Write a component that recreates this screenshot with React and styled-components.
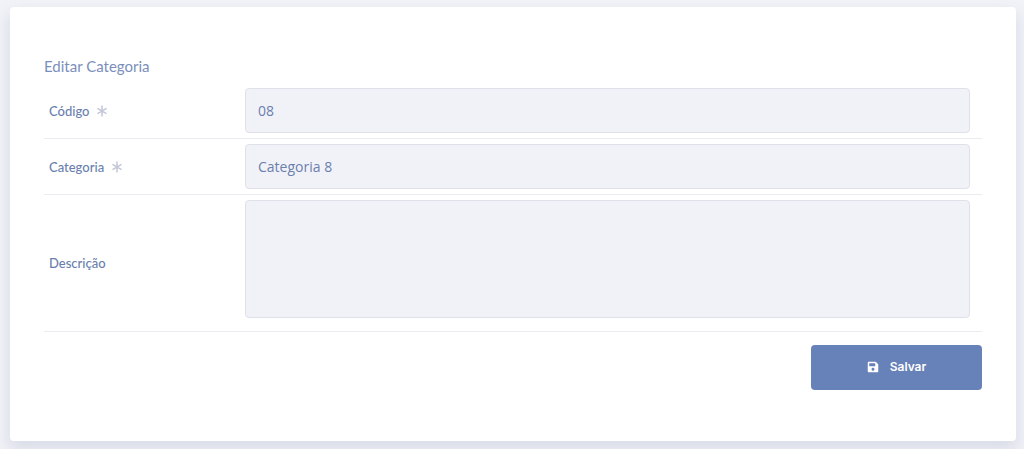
import React from "react";
import styled, { createGlobalStyle, css } from "styled-components";
import { FaSave } from "react-icons/fa";

const GlobalStyle = createGlobalStyle`
  *, *::before, *::after { box-sizing: border-box; }
  body {
    margin: 0;
    background: #f2f3f8;
    color: #6781b5;
    font-family: Lato, "Open Sans", sans-serif;
  }
`;

const Page = styled.main`
  padding: 7px 8px 8px 10px;
`;

const Card = styled.form`
  padding: 48px 34px 51px;
  background: #fff;
  border-radius: 4px;
  box-shadow: 0 8px 16px 2px rgba(82, 100, 150, 0.15);
`;

const Title = styled.h1`
  margin: 0;
  padding-bottom: 6px;
  font-size: 15px;
  line-height: 22px;
  font-weight: 400;
  color: #7b8fbb;
`;

const Row = styled.div`
  display: grid;
  grid-template-columns: 196px 1fr;
  align-items: center;
  padding: 5px 12px 5px 5px;
  border-bottom: 1px solid #ebecf2;
`;

const Label = styled.label`
  display: flex;
  align-items: center;
  gap: 8px;
  font-size: 13px;
  line-height: 20px;
  font-weight: 500;
  color: #6a7fae;
`;

const Star = styled.svg`
  width: 10px;
  height: 12px;
  stroke: #c3c7d7;
  stroke-width: 1.5;
  fill: none;
`;

const field = css`
  display: block;
  width: 100%;
  padding: 0 12px;
  border: 1px solid #dfe1ea;
  border-radius: 4px;
  outline: none;
  background: #f1f2f7;
  color: #6b7fae;
  font-family: "Open Sans", "Noto Sans", sans-serif;
  font-size: 14px;
`;

const TextInput = styled.input`
  ${field}
  height: 45px;
`;

const TextArea = styled.textarea`
  ${field}
  height: 118px;
  margin-bottom: 8px;
  padding: 12px;
  resize: none;
`;

const Actions = styled.div`
  display: flex;
  justify-content: flex-end;
  padding-top: 13px;
`;

const SaveButton = styled.button`
  display: flex;
  align-items: center;
  justify-content: center;
  gap: 11px;
  width: 171px;
  height: 45px;
  padding: 0 0 2px;
  border: 0;
  border-radius: 4px;
  background: #6781b9;
  color: #fff;
  font-family: Inter, "Open Sans", sans-serif;
  font-size: 12px;
  font-weight: 600;
  cursor: pointer;
`;

function Required() {
  return (
    <Star viewBox="0 0 10 12" aria-hidden="true">
      <path d="M5 .5v11M.5 3.3l9 5.4M9.5 3.3l-9 5.4" />
    </Star>
  );
}

export default function App() {
  return (
    <>
      <GlobalStyle />
      <Page>
        <Card onSubmit={(e) => e.preventDefault()}>
          <Title>Editar Categoria</Title>
          <Row>
            <Label htmlFor="codigo">
              Código <Required />
            </Label>
            <TextInput id="codigo" type="text" defaultValue="08" required />
          </Row>
          <Row>
            <Label htmlFor="categoria">
              Categoria <Required />
            </Label>
            <TextInput id="categoria" type="text" defaultValue="Categoria 8" required />
          </Row>
          <Row>
            <Label htmlFor="descricao">Descrição</Label>
            <TextArea id="descricao" />
          </Row>
          <Actions>
            <SaveButton type="submit">
              <FaSave size={12} aria-hidden="true" />
              Salvar
            </SaveButton>
          </Actions>
        </Card>
      </Page>
    </>
  );
}
